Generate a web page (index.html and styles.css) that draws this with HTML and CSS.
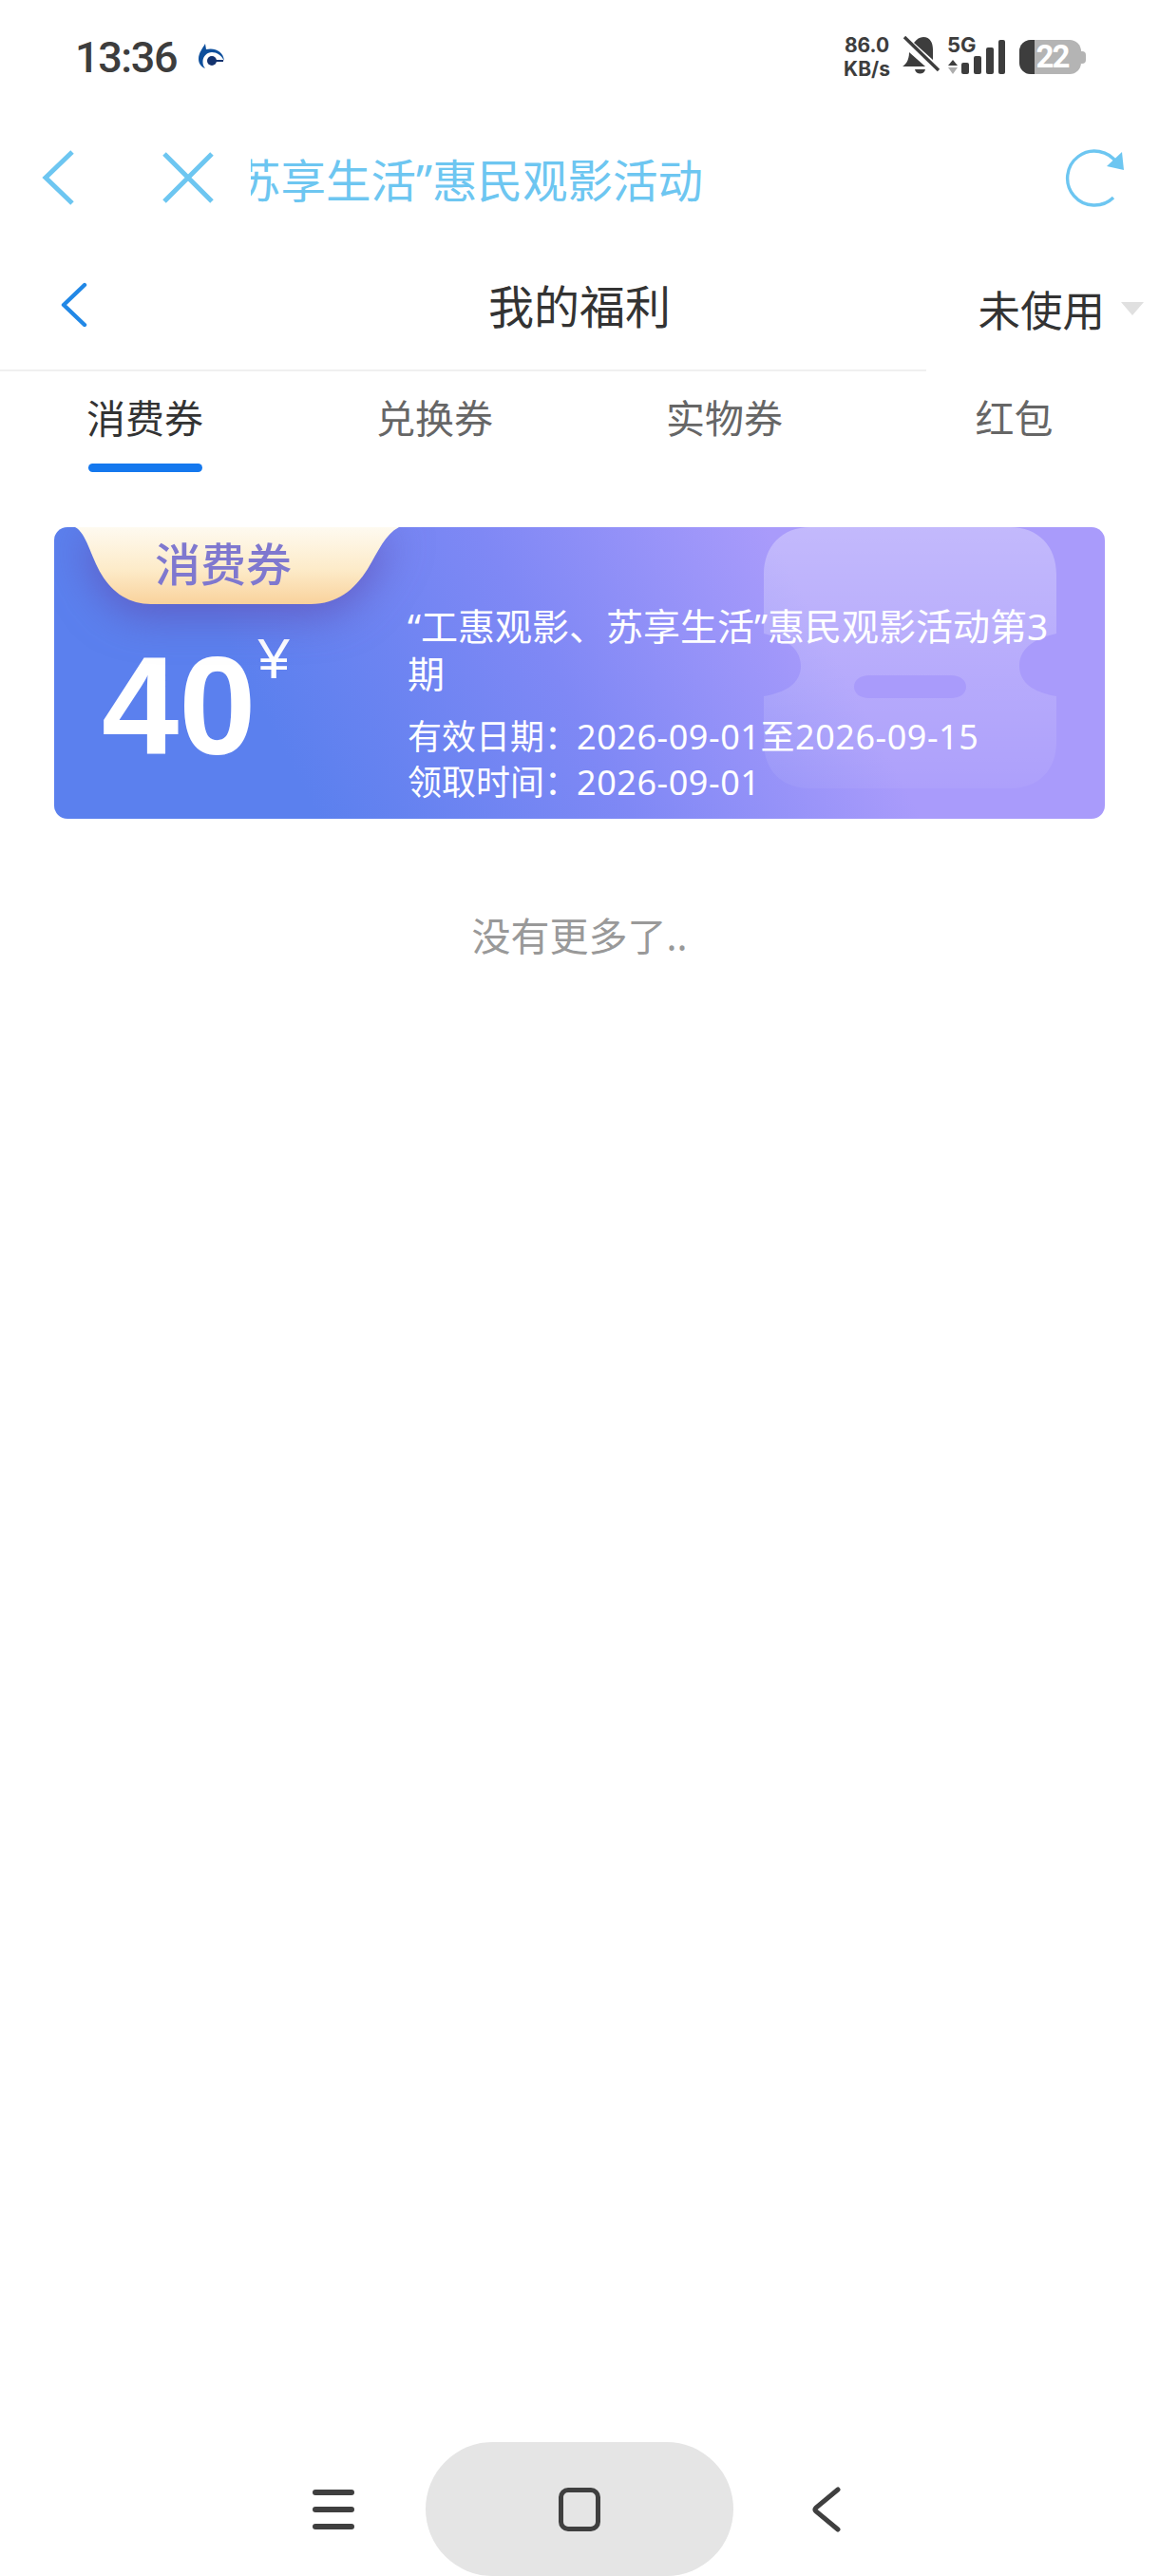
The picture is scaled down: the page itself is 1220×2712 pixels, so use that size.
FILE: index.html
```html
<!DOCTYPE html>
<html lang="zh-CN">
<head>
	<title>我的福利</title>
	<link rel="stylesheet" href="styles.css">
</head>
<body>
<div class="page">

	<!-- Status bar -->
	<div class="statusbar">
		<span class="time">13:36</span>
		<svg class="app-logo" width="30" height="30" viewBox="0 0 30 30">
			<path d="M8 1 L9 7 C17 5 27 8 28 19 C25 13 20 10 15 10 C10 10 6 14 5.5 19 C5.3 22 6 25 8 27 C3 25 1 21 1 17 C1 11 5 6 8 1 Z" fill="#0e4f9c"/>
			<circle cx="15" cy="19" r="5" fill="#14336f"/>
			<path d="M15 19 H27" stroke="#14336f" stroke-width="2"/>
		</svg>
		<div class="status-right">
			<div class="netspeed"><span>86.0</span><span>KB/s</span></div>
			<svg class="bell" width="40" height="44" viewBox="0 0 40 44">
				<path d="M12 7 C15 3 18 1 22 1 C29 1 32 7 32 14 L32 25 Z M7 17 L24 32 L0 32 C3 30 7 26 7 17 Z M13 35 H24 C23 41 14 41 13 35 Z" fill="#3d3d3d"/>
				<path d="M2 1 L38 36" stroke="#3d3d3d" stroke-width="3.4"/>
			</svg>
			<svg class="signal" width="64" height="44" viewBox="0 0 64 44">
				<text x="0" y="17" class="five-g">5G</text>
				<path d="M6 25 L11 31 H1 Z" fill="#3d3d3d"/>
				<path d="M6 40 L11 33 H1 Z" fill="#adadad"/>
				<rect x="15" y="28" width="8" height="12" rx="2" fill="#3d3d3d"/>
				<rect x="28" y="21" width="8" height="19" rx="2" fill="#3d3d3d"/>
				<rect x="41" y="12" width="8" height="28" rx="2" fill="#3d3d3d"/>
				<rect x="54" y="4" width="7" height="36" rx="2" fill="#3d3d3d"/>
			</svg>
			<div class="battery">
				<div class="battery-fill"></div>
				<span class="battery-num">22</span>
				<div class="battery-cap"></div>
			</div>
		</div>
	</div>

	<!-- Browser bar -->
	<div class="browserbar">
		<svg class="browser-back" width="36" height="60" viewBox="0 0 36 60">
			<path d="M32 3 L4 30 L32 57" fill="none" stroke="#6dc6f1" stroke-width="5"/>
		</svg>
		<svg class="browser-close" width="56" height="56" viewBox="0 0 56 56">
			<path d="M3 3 L53 53 M53 3 L3 53" fill="none" stroke="#6dc6f1" stroke-width="5"/>
		</svg>
		<div class="browser-title"><span>“工惠观影、苏享生活”惠民观影活动</span></div>
		<svg class="browser-refresh" width="64" height="64" viewBox="0 0 64 64">
			<path d="M51 53 A28.500 28.500 0 1 1 55 17" fill="none" stroke="#6dc6f1" stroke-width="3.4"/>
			<path d="M60 5 L62 24 L44 20 Z" fill="#6dc6f1"/>
		</svg>
	</div>

	<!-- Page title -->
	<div class="navrow">
		<div class="navbar">
			<svg class="nav-back" width="28" height="48" viewBox="0 0 28 48">
				<path d="M25 3 L3 24 L25 45" fill="none" stroke="#2288e6" stroke-width="4.4" stroke-linecap="round" stroke-linejoin="round"/>
			</svg>
			<h1>我的福利</h1>
		</div>
		<div class="status-select">
			<span>未使用</span>
			<i class="select-arrow"></i>
		</div>
	</div>

	<!-- Tabs -->
	<div class="tabs">
		<div class="tab active">消费券</div>
		<div class="tab">兑换券</div>
		<div class="tab">实物券</div>
		<div class="tab">红包</div>
	</div>

	<!-- Coupon -->
	<div class="coupon">
		<svg class="coupon-mark" width="310" height="276" viewBox="0 0 310 276">
			<defs>
				<linearGradient id="markfade" x1="0" y1="0" x2="0" y2="1">
					<stop offset="0" stop-color="#fff" stop-opacity="0.3"/>
					<stop offset="1" stop-color="#fff" stop-opacity="0.05"/>
				</linearGradient>
			</defs>
			<path fill-rule="evenodd" fill="url(#markfade)" d="M50 0 H260 C290 0 309 20 309 50 V112 C282 118 270 130 270 146 C270 164 285 174 309 178 V226 C309 256 290 275 260 275 H50 C20 275 1 256 1 226 V178 C25 174 40 164 40 146 C40 130 28 118 1 112 V50 C1 20 20 0 50 0 Z M112 156 C102 156 96 161 96 168 C96 175 102 180 112 180 H198 C208 180 214 175 214 168 C214 161 208 156 198 156 Z"/>
		</svg>
		<div class="coupon-badge">
			<svg class="badge-shape" width="350" height="82" viewBox="0 0 350 82">
				<defs>
					<linearGradient id="badgefill" x1="0" y1="0" x2="0" y2="1">
						<stop offset="0" stop-color="#fefaf0"/>
						<stop offset="0.55" stop-color="#fdebc9"/>
						<stop offset="1" stop-color="#f9d29c"/>
					</linearGradient>
				</defs>
				<path d="M2 0 C14 6 18 30 30 50 C42 70 60 81 82 81 H250 C278 81 296 66 310 44 C322 24 328 8 343 0 Z" fill="url(#badgefill)"/>
			</svg>
			<span class="badge-text">消费券</span>
		</div>
		<div class="coupon-amount">
			<span class="amount-num">40</span>
			<span class="amount-unit">¥</span>
		</div>
		<div class="coupon-info">
			<div class="coupon-name">“工惠观影、苏享生活”惠民观影活动第3期</div>
			<div class="coupon-dates">
				<div>有效日期：<span class="date">2026-09-01至2026-09-15</span></div>
				<div>领取时间：<span class="date">2026-09-01</span></div>
			</div>
		</div>
	</div>

	<div class="nomore">没有更多了..</div>

	<!-- Android nav -->
	<div class="sysnav">
		<div class="sys-menu"><i></i><i></i><i></i></div>
		<div class="sys-home"><i></i></div>
		<svg class="sys-back" width="32" height="48" viewBox="0 0 32 48">
			<path d="M28 3 L5 22 Q3 24 5 26 L28 45" fill="none" stroke="#3f3f3f" stroke-width="5" stroke-linecap="round"/>
		</svg>
	</div>
</div>
</body>
</html>
```

FILE: styles.css
```css
* {
	box-sizing: border-box;
}

body {
	margin: 0;
	background-color: white;
	font-family: "Noto Sans", "Noto Sans CJK SC", sans-serif;
}

.page {
	display: flex;
	flex-direction: column;
	width: 1220px;
	height: 2712px;
	overflow: hidden;
}

/* Status bar */
.statusbar {
	display: flex;
	align-items: center;
	height: 120px;
	padding: 0 82px 0 79px;
	color: #3d3d3d;
}

.time {
	font-family: "Roboto", sans-serif;
	font-size: 45px;
	font-weight: 500;
	letter-spacing: -1.4px;
}

.app-logo {
	margin-left: 22px;
}

.status-right {
	display: flex;
	align-items: center;
	margin-left: auto;
}

.netspeed {
	display: flex;
	flex-direction: column;
	align-items: center;
	font-family: "Inter", sans-serif;
	font-size: 21px;
	font-weight: 700;
	line-height: 25px;
	white-space: nowrap;
}

.bell {
	margin-left: 13px;
}

.signal {
	margin-left: 7px;
	overflow: visible;
}

.five-g {
	font-family: "Inter", sans-serif;
	font-size: 22px;
	font-weight: 700;
	fill: #3d3d3d;
}

.battery {
	position: relative;
	display: flex;
	justify-content: center;
	align-items: center;
	width: 65px;
	height: 36px;
	margin-left: 12px;
	padding-left: 4px;
	border-radius: 12px;
	background-color: #b4b4b4;
}

.battery-fill {
	position: absolute;
	left: 0;
	top: 0;
	bottom: 0;
	width: 16px;
	border-radius: 12px 0 0 12px;
	background-color: #3d3d3d;
}

.battery-num {
	position: relative;
	color: white;
	font-family: "Roboto", sans-serif;
	font-size: 33px;
	font-weight: 700;
	letter-spacing: -2px;
	line-height: 36px;
}

.battery-cap {
	position: absolute;
	right: -5px;
	top: 12px;
	width: 5px;
	height: 13px;
	border-radius: 0 4px 4px 0;
	background-color: #b4b4b4;
}

/* Browser bar */
.browserbar {
	display: flex;
	align-items: center;
	height: 134px;
	padding-left: 44px;
}

.browser-close {
	margin-left: 90px;
}

.browser-title {
	display: flex;
	justify-content: flex-end;
	width: 476px;
	margin-left: 38px;
	overflow: hidden;
	color: #6dc6f1;
	font-size: 47.5px;
	white-space: nowrap;
}

.browser-title span {
	flex-shrink: 0;
}

.browser-refresh {
	margin-left: 381px;
}

/* Page title row */
.navrow {
	position: relative;
	height: 137px;
}

.navbar {
	display: flex;
	align-items: center;
	width: 975px;
	height: 137px;
	padding: 0 0 4px 64px;
	border-bottom: 2px solid #f0f0f0;
}

.nav-back {
	margin-top: 3px;
}

.navbar h1 {
	margin: 0 0 0 422px;
	color: #333333;
	font-size: 48px;
	font-weight: normal;
}

.status-select {
	position: absolute;
	right: 16px;
	top: 38px;
	display: flex;
	align-items: center;
	gap: 17px;
	color: #333333;
	font-size: 44.5px;
}

.select-arrow {
	width: 0;
	height: 0;
	border-left: 12px solid transparent;
	border-right: 12px solid transparent;
	border-top: 14px solid #e0e0e0;
}

/* Tabs */
.tabs {
	display: grid;
	grid-template-columns: repeat(4, 1fr);
	height: 109px;
}

.tab {
	position: relative;
	padding-top: 17px;
	color: #666666;
	font-size: 41px;
	text-align: center;
}

.tab.active {
	color: #333333;
}

.tab.active::after {
	content: "";
	position: absolute;
	left: 93px;
	top: 97px;
	width: 120px;
	height: 9px;
	border-radius: 5px;
	background-color: #1478ee;
}

/* Coupon */
.coupon {
	position: relative;
	display: flex;
	width: 1106px;
	height: 307px;
	margin: 55px 0 0 57px;
	border-radius: 14px;
	overflow: hidden;
	background: linear-gradient(62deg, #5b80ee 22%, #7f88f5 48%, #a99bfb 72%);
	color: white;
}

.coupon-mark {
	position: absolute;
	left: 746px;
	top: 0;
}

.coupon-badge {
	position: absolute;
	left: 20px;
	top: 0;
	width: 350px;
	height: 82px;
	filter: drop-shadow(0 12px 22px rgba(96, 70, 170, 0.6));
}

.badge-shape {
	display: block;
}

.badge-text {
	position: absolute;
	left: 86px;
	top: 6px;
	color: #7f78cf;
	font-size: 48px;
	font-weight: 500;
	line-height: 66px;
}

.coupon-amount {
	display: flex;
	align-items: flex-start;
	width: 372px;
	padding: 100px 0 0 50px;
}

.amount-num {
	margin-top: 4px;
	font-family: "Liberation Sans", sans-serif;
	font-size: 146px;
	font-weight: bold;
	line-height: 170px;
}

.amount-unit {
	margin: 4px 0 0 2px;
	font-family: "Liberation Sans", sans-serif;
	font-size: 60px;
	line-height: 70px;
}

.coupon-info {
	position: relative;
	width: 700px;
	padding-top: 79px;
}

.coupon-name {
	font-size: 39px;
	line-height: 50px;
}

.coupon-dates {
	margin-top: 18px;
	font-size: 36px;
	line-height: 48px;
}

.date {
	margin-left: -2px;
	letter-spacing: 0.55px;
}

.nomore {
	margin-top: 91px;
	color: #999999;
	font-size: 41px;
	text-align: center;
}

/* System navigation */
.sysnav {
	display: flex;
	align-items: center;
	justify-content: center;
	height: 141px;
	margin-top: auto;
}

.sys-menu {
	display: flex;
	flex-direction: column;
	gap: 12px;
	width: 44px;
	margin-right: 75px;
}

.sys-menu i {
	height: 6px;
	border-radius: 3px;
	background-color: #3f3f3f;
}

.sys-home {
	display: flex;
	justify-content: center;
	align-items: center;
	width: 324px;
	height: 141px;
	border-radius: 71px;
	background-color: #e5e5e5;
}

.sys-home i {
	width: 44px;
	height: 46px;
	border: 5px solid #3f3f3f;
	border-radius: 10px;
}

.sys-back {
	margin-left: 82px;
	margin-right: 5px;
}
```
